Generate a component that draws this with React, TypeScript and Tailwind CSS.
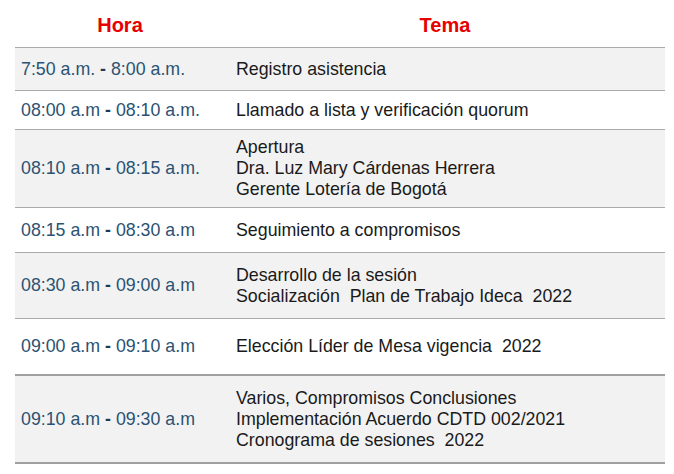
const rows: { time: string[]; tema: string[]; h: string; bg: string; border: string }[] = [
  { time: ['7:50 a.m.', '8:00 a.m.'], tema: ['Registro asistencia'], h: 'h-[43px]', bg: 'bg-[#f2f2f2]', border: 'border-t border-[#aaaaaa]' },
  { time: ['08:00 a.m', '08:10 a.m.'], tema: ['Llamado a lista y verificación quorum'], h: 'h-[39px]', bg: 'bg-white', border: 'border-t border-[#aaaaaa]' },
  {
    time: ['08:10 a.m', '08:15 a.m.'],
    tema: ['Apertura', 'Dra. Luz Mary Cárdenas Herrera', 'Gerente Lotería de Bogotá'],
    h: 'h-[78px]',
    bg: 'bg-[#f2f2f2]',
    border: 'border-t border-[#aaaaaa]',
  },
  { time: ['08:15 a.m', '08:30 a.m'], tema: ['Seguimiento a compromisos'], h: 'h-[45px]', bg: 'bg-white', border: 'border-t border-[#aaaaaa]' },
  {
    time: ['08:30 a.m', '09:00 a.m'],
    tema: ['Desarrollo de la sesión', 'Socialización  Plan de Trabajo Ideca  2022'],
    h: 'h-[66px]',
    bg: 'bg-[#f2f2f2]',
    border: 'border-t border-[#aaaaaa]',
  },
  { time: ['09:00 a.m', '09:10 a.m'], tema: ['Elección Líder de Mesa vigencia  2022'], h: 'h-[56px]', bg: 'bg-white', border: 'border-t border-[#aaaaaa]' },
  {
    time: ['09:10 a.m', '09:30 a.m'],
    tema: ['Varios, Compromisos Conclusiones', 'Implementación Acuerdo CDTD 002/2021', 'Cronograma de sesiones  2022'],
    h: 'h-[90px]',
    bg: 'bg-[#f2f2f2]',
    border: 'border-y-2 border-[#a0a0a0]',
  },
];

export default function App() {
  return (
    <div className="min-h-screen bg-white pl-[15px] pt-0" style={{ fontFamily: '"Liberation Sans", Arial, sans-serif' }}>
      <div className="w-[650px]">
        {/* encabezado */}
        <div className="grid h-[47px] grid-cols-[210px_440px] items-center text-[20px] font-bold text-[#e60000]">
          <div className="pt-[3px] text-center">Hora</div>
          <div className="pt-[3px] text-center">Tema</div>
        </div>
        {rows.map((r, i) => (
          <div key={i} className={`grid grid-cols-[210px_440px] items-center ${r.h} ${r.bg} ${r.border}`}>
            <div className="pl-[6px] text-[17.8px] whitespace-pre text-[#2b5273]">
              {r.time[0]}
              <span className="font-bold text-[#1d3a55]"> - </span>
              {r.time[1]}
            </div>
            <div className="flex flex-col pl-[11px] text-[17.8px] leading-[21px] whitespace-pre text-[#1a1a1a]">
              {r.tema.map((t) => (
                <span key={t}>{t}</span>
              ))}
            </div>
          </div>
        ))}
      </div>
    </div>
  );
}
